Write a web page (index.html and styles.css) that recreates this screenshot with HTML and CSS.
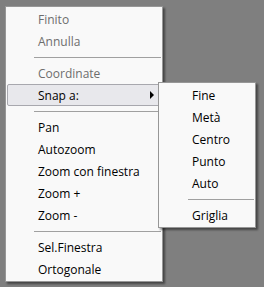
FILE: index.html
```html
<!DOCTYPE html>
<html>
<head>
<meta charset="utf-8">
<link rel="stylesheet" href="styles.css">
</head>
<body>
<div class="stage">
  <div class="menu main">
    <div class="item disabled">Finito</div>
    <div class="item disabled">Annulla</div>
    <div class="sep"></div>
    <div class="item disabled">Coordinate</div>
    <div class="item active">Snap a:<span class="arrow"></span></div>
    <div class="sep"></div>
    <div class="item">Pan</div>
    <div class="item">Autozoom</div>
    <div class="item">Zoom con finestra</div>
    <div class="item">Zoom +</div>
    <div class="item">Zoom -</div>
    <div class="sep"></div>
    <div class="item">Sel.Finestra</div>
    <div class="item">Ortogonale</div>
  </div>
  <div class="menu sub">
    <div class="item">Fine</div>
    <div class="item">Metà</div>
    <div class="item">Centro</div>
    <div class="item">Punto</div>
    <div class="item">Auto</div>
    <div class="sep"></div>
    <div class="item">Griglia</div>
  </div>
</div>
</body>
</html>
```
FILE: styles.css
```css
html, body {
  margin: 0;
  padding: 0;
  background: #7f7f7f;
  width: 264px;
  height: 287px;
  overflow: hidden;
}
.stage {
  position: relative;
  padding: 6px 0 0 5px;
}
.menu {
  background: #f9f9f9;
  border: 1px solid #979797;
  box-sizing: border-box;
  padding: 1px 0;
  box-shadow: 2px 2px 2px rgba(0, 0, 0, 0.45);
  font-family: "Open Sans", "Noto Sans", sans-serif;
  font-size: 12px;
  color: #000;
}
.main {
  width: 158px;
}
.sub {
  position: absolute;
  left: 158px;
  top: 82px;
  width: 98px;
}
.item {
  position: relative;
  height: 22px;
  line-height: 22px;
  padding-left: 30px;
  white-space: nowrap;
  margin: 0 1px;
  border: 1px solid transparent;
  box-sizing: border-box;
}
.sub .item {
  padding-left: 31px;
}
.disabled {
  color: #6d6d6d;
}
.active {
  background: #e8e8ec;
  border-color: #a8a8ae;
  border-radius: 2px;
}
.arrow {
  position: absolute;
  right: 6px;
  top: 6px;
  width: 0;
  height: 0;
  border-top: 4px solid transparent;
  border-bottom: 4px solid transparent;
  border-left: 4px solid #000;
}
.sep {
  height: 10px;
  display: flex;
  align-items: center;
  padding-left: 28px;
  padding-right: 1px;
}
.sep::before {
  content: "";
  flex: 1;
  height: 1px;
  background: #a0a0a0;
}
.sub .sep {
  padding-left: 29px;
}
```
